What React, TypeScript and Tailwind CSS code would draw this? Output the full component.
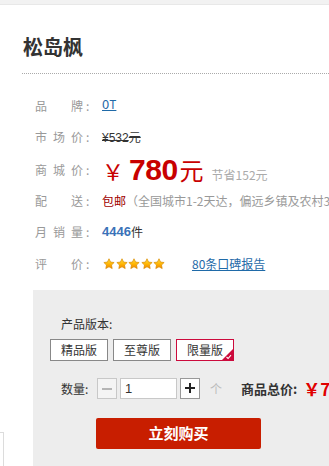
import React from "react";

const cjk = { fontFamily: '"Noto Sans CJK SC", "Liberation Sans", sans-serif' };

function Label({ chars }: { chars: string[] }) {
  return (
    <div className="flex w-[67px] shrink-0 items-center text-[12px] text-[#999]">
      <span className="flex w-[48px] justify-between">
        {chars.map((c, i) => (
          <span key={i}>{c}</span>
        ))}
      </span>
      <span className="ml-[3px]">:</span>
    </div>
  );
}

function Star() {
  return (
    <svg width="12" height="12" viewBox="0 0 24 24" className="mr-[0.6px] shrink-0">
      <defs>
        <linearGradient id="sg" x1="0" y1="0" x2="0" y2="1">
          <stop offset="0" stopColor="#ffe24a" />
          <stop offset="0.55" stopColor="#ffb400" />
          <stop offset="1" stopColor="#f08400" />
        </linearGradient>
      </defs>
      <path
        d="M12 1.5l3.1 6.6 7.2.9-5.3 5 1.4 7.1L12 17.6l-6.4 3.5 1.4-7.1-5.3-5 7.2-.9z"
        fill="url(#sg)"
        stroke="#d98a00"
        strokeWidth="1.4"
        strokeLinejoin="round"
      />
    </svg>
  );
}

export default function App() {
  return (
    <div className="relative h-[466px] w-[329px] overflow-hidden bg-white" style={cjk}>
      <div className="h-[5px] border-b border-[#e8e8e8] bg-[#f2f2f2]" />
      <div className="ml-[22px] border-b border-dotted border-[#aaa] pb-[12px] pt-[28px]">
        <h1 className="ml-[1px] text-[20px] font-bold leading-[28px] text-[#333]">松岛枫</h1>
      </div>

      <div className="ml-[35px] mt-[17px] flex flex-col whitespace-nowrap text-[12px]">
        <div className="flex h-[30px] items-center">
          <Label chars={["品", "牌"]} />
          <a className="text-[#1f6aa8] underline" style={{ fontFamily: '"Liberation Mono", monospace' }}>
            OT
          </a>
        </div>
        <div className="flex h-[32px] items-center">
          <Label chars={["市", "场", "价"]} />
          <span className="text-[#333] line-through">
            <span style={{ fontFamily: '"Liberation Sans", sans-serif' }}>¥532</span>元
          </span>
        </div>
        <div className="flex h-[34px] items-center">
          <Label chars={["商", "城", "价"]} />
          <span className="flex shrink-0 items-baseline text-[#c80000]">
            <span className="text-[22px] leading-none">￥</span>
            <span
              className="ml-[5px] text-[30px] font-bold leading-none tracking-[-0.5px]"
              style={{ fontFamily: '"Liberation Sans", sans-serif' }}
            >
              780
            </span>
            <span className="ml-[2px] text-[24px] leading-none">元</span>
            <span className="ml-[8px] text-[12px] leading-none text-[#aaa]">节省152元</span>
          </span>
        </div>
        <div className="flex h-[28px] items-center">
          <Label chars={["配", "送"]} />
          <span className="shrink-0 text-[#a00000]">包邮</span>
          <span className="shrink-0 text-[#999]">（全国城市1-2天达，偏远乡镇及农村3-5天达）</span>
        </div>
        <div className="flex h-[34px] items-center">
          <Label chars={["月", "销", "量"]} />
          <span className="text-[13px] font-bold text-[#3a72b8]" style={{ fontFamily: '"Liberation Sans", sans-serif' }}>
            4446
          </span>
          <span className="text-[#333]">件</span>
        </div>
        <div className="flex h-[30px] items-center">
          <Label chars={["评", "价"]} />
          <span className="ml-[1px] flex shrink-0 items-center">
            <Star />
            <Star />
            <Star />
            <Star />
            <Star />
          </span>
          <a className="ml-[26px] shrink-0 text-[#1f6aa8] underline">80条口碑报告</a>
        </div>
      </div>

      <div className="ml-[33px] mt-[11px] h-[200px] bg-[#ededed] pl-[17px] pt-[24px]">
        <div className="ml-[11px] text-[12px] leading-[20px] text-[#333]">产品版本:</div>
        <div className="mt-[5px] flex gap-[5px]">
          <div className="flex h-[22px] w-[58px] shrink-0 items-center justify-center border border-[#888] bg-white text-[12px] text-[#333]">
            精品版
          </div>
          <div className="flex h-[22px] w-[58px] shrink-0 items-center justify-center border border-[#888] bg-white text-[12px] text-[#333]">
            至尊版
          </div>
          <div className="relative flex h-[22px] w-[58px] shrink-0 items-center justify-center border border-[#cc0a3c] bg-white text-[12px] text-[#333]">
            限量版
            <svg width="11" height="11" viewBox="0 0 11 11" className="absolute bottom-0 right-0">
              <path d="M11 0V11H0z" fill="#cc0a3c" />
              <path d="M4.5 8l1.6 1.5L9 6.2" fill="none" stroke="#fff" strokeWidth="1.1" />
            </svg>
          </div>
        </div>
        <div className="ml-[11px] mt-[17px] flex h-[21px] items-center whitespace-nowrap">
          <span className="w-[36px] shrink-0 text-[12px] text-[#333]">数量:</span>
          <div className="flex h-[21px] w-[20px] shrink-0 items-center justify-center border border-[#c8c8c8] bg-[#f4f4f4]">
            <div className="h-[2px] w-[10px] bg-[#b5b5b5]" />
          </div>
          <div
            className="ml-[3px] flex h-[21px] w-[57px] shrink-0 items-center border border-[#c8c8c8] bg-white pl-[4px] text-[13px] text-[#333]"
            style={{ fontFamily: '"Liberation Sans", sans-serif' }}
          >
            1
          </div>
          <div className="relative ml-[3px] h-[21px] w-[20px] shrink-0 border border-[#999] bg-white">
            <div className="absolute left-[4px] top-[8px] h-[2px] w-[10px] bg-[#222]" />
            <div className="absolute left-[8px] top-[4px] h-[10px] w-[2px] bg-[#222]" />
          </div>
          <span className="ml-[10px] shrink-0 text-[12px] text-[#bbb]">个</span>
          <span className="ml-[19px] shrink-0 text-[13px] font-bold text-[#333]">商品总价:</span>
          <span className="ml-[6px] shrink-0 text-[17px] font-bold text-[#e00000]">￥780</span>
        </div>
        <div className="ml-[46px] mt-[19px] flex h-[31px] w-[165px] items-center justify-center rounded-[2px] bg-[#c81e00] text-[15px] font-bold text-white">
          立刻购买
        </div>
      </div>

      <div className="absolute left-0 top-[432px] h-[40px] w-[4px] border-r border-t border-[#dcdcdc]" />
    </div>
  );
}
